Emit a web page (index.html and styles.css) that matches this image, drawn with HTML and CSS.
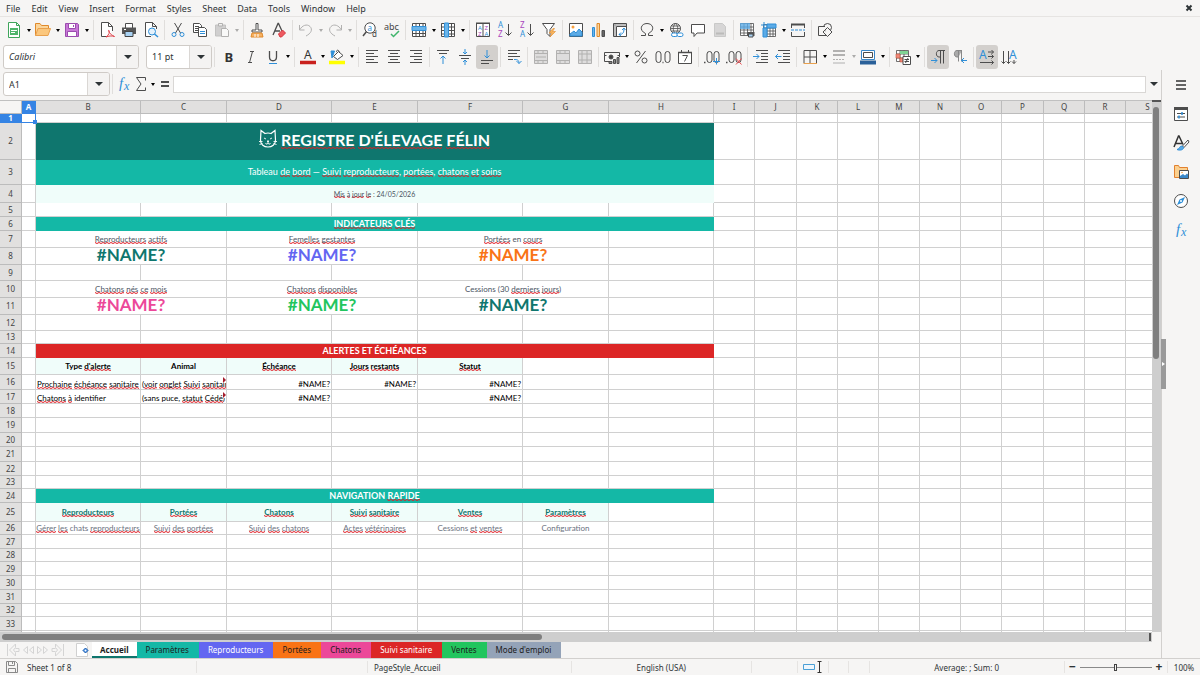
FILE: index.html
```html
<!DOCTYPE html>
<html lang="en">

<head>
    <meta charset="UTF-8">
    <meta name="viewport" content="width=device-width, initial-scale=1.0">
    <title>Registre d'élevage félin</title>
    <link rel="stylesheet" href="styles.css">
</head>

<body>
    <div class="app">
        <header class="menubar">
            <nav class="menus">
                <button>File</button>
                <button>Edit</button>
                <button>View</button>
                <button>Insert</button>
                <button>Format</button>
                <button>Styles</button>
                <button>Sheet</button>
                <button>Data</button>
                <button>Tools</button>
                <button>Window</button>
                <button>Help</button>
            </nav>
            <button class="close" aria-label="Close document"><svg viewBox="0 0 8 8"><path d="M1.5 1.5l5 5M6.5 1.5l-5 5"/></svg></button>
        </header>

        <div class="toolbar standard" id="standard"></div>

        <div class="toolbar formatting">
            <div class="combo font-name">
                <input type="text" value="Calibri" aria-label="Font name">
                <button aria-label="Choose font"><i class="arrow big"></i></button>
            </div>
            <div class="combo font-size">
                <input type="text" value="11 pt" aria-label="Font size">
                <button aria-label="Choose size"><i class="arrow big"></i></button>
            </div>
            <div class="tools" id="formatting"></div>
        </div>

        <div class="workspace">
            <main class="main">
                <div class="formula-bar">
                    <div class="combo name-box">
                        <input type="text" value="A1" aria-label="Name box">
                        <button aria-label="Choose range"><i class="arrow big"></i></button>
                    </div>
                    <i class="sep"></i>
                    <div class="tools" id="formula"></div>
                    <input class="formula-input" type="text" aria-label="Formula">
                    <button class="expand" aria-label="Expand formula bar"><i class="arrow big"></i></button>
                </div>

                <div class="sheet">
                    <div class="grid">
                        <table id="grid"></table>
                    </div>
                    <div class="vscroll"><i class="thumb"></i></div>
                </div>
                <div class="hscroll"><i class="thumb"></i><i class="end"></i></div>

                <div class="tabs">
                    <div class="tab-nav">
                        <button aria-label="First sheet"><svg viewBox="0 0 14 14"><path d="M1.500 1v12M9.500 1l-6 6 6 6v-3.500L7.500 7l2-2.500zM9.500 5.500H13v3H9.500"/></svg></button>
                        <button aria-label="Previous sheet"><svg viewBox="0 0 14 14"><path d="M6.500 3.500l-4 3.500 4 3.500zM12.500 3.500l-4 3.500 4 3.500z"/></svg></button>
                        <button aria-label="Next sheet"><svg viewBox="0 0 14 14"><path d="M1.500 3.500l4 3.500-4 3.500zM7.500 3.500l4 3.500-4 3.500z"/></svg></button>
                        <button aria-label="Last sheet"><svg viewBox="0 0 14 14"><path d="M12.500 1v12M4.500 1l6 6-6 6V9.500L6.500 7l-2-2.500zM4.500 5.500H1v3h3.500"/></svg></button>
                    </div>
                    <button class="add-sheet" aria-label="Add sheet"><svg viewBox="0 0 12 14"><path d="M.5 .5h8l3 3v10h-11z" fill="#fff" stroke="#d0d0d0"/><path d="M9.500 5L12 7.500 9.500 10 7 7.500z" fill="#3584e4" stroke="#1f5fae"/><circle cx="9.500" cy="7.500" r="1" fill="#fff"/></svg></button>
                    <button class="tab active">Accueil</button>
                    <button class="tab teal">Paramètres</button>
                    <button class="tab indigo">Reproducteurs</button>
                    <button class="tab orange">Portées</button>
                    <button class="tab pink">Chatons</button>
                    <button class="tab red">Suivi sanitaire</button>
                    <button class="tab green">Ventes</button>
                    <button class="tab slate">Mode d'emploi</button>
                </div>
            </main>

            <aside class="sidebar" id="sidebar"><i class="grip"></i></aside>
        </div>

        <footer class="statusbar">
            <svg class="save-state" viewBox="0 0 12 12"><path d="M.5 .5h9l2 2v9H.5zM2.500 .5v4h6v-4M2.500 11.500v-4h7v4M6.500 1v2" fill="none" stroke="#8a8a8a"/></svg>
            <span class="field sheet-count">Sheet 1 of 8</span>
            <span class="field search-result"></span>
            <span class="field page-style">PageStyle_Accueil</span>
            <span class="field language">English (USA)</span>
            <span class="field insert-mode"></span>
            <span class="field modes"><svg viewBox="0 0 20 12"><path d="M.5 3.500h11v5H.5z" fill="#eef6fc" stroke="#4a9fd6"/><path d="M14.500 .5h4M14.500 11.500h4M16.500 1v10" fill="none" stroke="#333"/></svg></span>
            <span class="field blank"></span>
            <span class="field blank"></span>
            <span class="field sum">Average: ; Sum: 0</span>
            <div class="field zoom">
                <button aria-label="Zoom out">−</button>
                <input type="range" min="0" max="100" value="50" aria-label="Zoom">
                <button aria-label="Zoom in">+</button>
            </div>
            <span class="percent">100%</span>
        </footer>
    </div>

    <script src="script.js"></script>
</body>
</html>
```
FILE: styles.css
```css
* {
    box-sizing: border-box;
}

body {
    margin: 0;
    font-family: "Noto Sans", sans-serif;
    font-size: 9px;
    color: #2e3436;
    background-color: #f6f5f4;
}

button,
input {
    font: inherit;
    color: inherit;
    margin: 0;
    padding: 0;
    border: none;
    background: none;
}

button {
    display: flex;
    align-items: center;
    justify-content: center;
    flex: none;
}

svg {
    display: block;
    flex: none;
    overflow: visible;
}

.app {
    display: flex;
    flex-direction: column;
    height: 100vh;
    overflow: hidden;
}

/* menu bar */
.menubar {
    display: flex;
    justify-content: space-between;
    height: 17px;
    border-bottom: 1px solid #e6e4e2;
}

.menus {
    display: flex;
    gap: 1px;
    padding-left: 1px;
}

.menus button {
    padding: 0 5px;
}

.close {
    width: 22px;
}

.close svg {
    width: 8px;
    height: 8px;
    stroke: #2e3436;
    stroke-width: 2;
}

/* toolbars */
.toolbar {
    display: flex;
    align-items: center;
    height: 27px;
    padding-left: 3px;
}

.standard {
    height: 26px;
}

.tools {
    display: flex;
    align-items: center;
}

.tool {
    width: 22px;
    height: 24px;
    border-radius: 3px;
}

.tool svg {
    width: 16px;
    height: 16px;
    fill: none;
    stroke: #4d4d4d;
}

.tool text {
    stroke: none;
    line-height: 1;
}

.tool .serif {
    font-family: "Liberation Serif", serif;
}

.tool.on {
    background-color: #d3d0cd;
}

.tool.off {
    opacity: 0.4;
}

.drop {
    width: 7px;
    height: 24px;
}

.drop.off {
    opacity: 0.3;
}

.arrow {
    border: 2px solid transparent;
    border-top: 3px solid #000;
    border-bottom: none;
}

.arrow.big {
    border-width: 4px 4px 0;
    border-top-color: #2e3436;
}

.sep {
    flex: none;
    width: 1px;
    height: 20px;
    margin: 0 2px;
    background-color: #e0dedc;
}

.drop + .sep {
    margin-left: 3px;
}

.combo {
    display: flex;
    flex: none;
    height: 24px;
    border: 1px solid #cfcbc7;
    border-radius: 3px;
    background-color: #fff;
    overflow: hidden;
}

.combo input {
    flex: 1;
    min-width: 0;
    padding-left: 5px;
}

.combo button {
    width: 22px;
    border-left: 1px solid #dad7d4;
    background-color: #f4f3f2;
}

.font-name {
    width: 136px;
    margin-right: 7px;
}

.font-name input {
    font-style: italic;
}

.font-size {
    width: 66px;
    margin-right: 2px;
}

.formatting .tools::before {
    content: "";
    width: 1px;
    height: 20px;
    margin-right: 3px;
    background-color: #e0dedc;
}

/* middle part: sheet and sidebar */
.workspace {
    display: flex;
    flex: 1;
    min-height: 0;
}

.main {
    display: flex;
    flex-direction: column;
    flex: 1;
    min-width: 0;
}

.formula-bar {
    display: flex;
    align-items: center;
    height: 30px;
    padding: 0 0 2px 3px;
}

.name-box {
    width: 107px;
}

.formula-bar .tool {
    width: 17px;
}

.formula-input {
    flex: 1;
    min-width: 0;
    height: 17px;
    border: 1px solid #d9d7d5;
    background-color: #fff;
}

.expand {
    width: 15px;
    height: 17px;
}

.sheet {
    display: flex;
    flex: 1;
    min-height: 0;
}

.grid {
    flex: 1;
    min-width: 0;
    overflow: hidden;
    border-top: 1px solid #c0c0c0;
    background-color: #fff;
}

.grid table {
    table-layout: fixed;
    width: 1170px;
    border-collapse: separate;
    border-spacing: 0;
    font-family: Lato, Carlito, sans-serif;
    font-size: 8px;
    line-height: 10px;
    color: #000;
}

.grid th,
.grid td {
    padding: 0 1px;
    border-right: 1px solid #d0d0d0;
    border-bottom: 1px solid #d0d0d0;
    overflow: hidden;
    white-space: nowrap;
}

.grid th {
    padding: 0;
    font-family: "Noto Sans", sans-serif;
    font-size: 8px;
    font-weight: normal;
    color: #444;
    background-color: #e1e0df;
    border-color: #bcbcbc;
}

.grid thead th:first-child {
    background-color: #f6f5f4;
}

.grid th.current {
    font-weight: bold;
    color: #fff;
    background-color: #3584e4;
    border-color: #3584e4;
}

.grid td.cursor {
    position: relative;
    overflow: visible;
    border-color: #3584e4;
}

.cursor::after {
    content: "";
    position: absolute;
    right: -2px;
    bottom: -2px;
    width: 4px;
    height: 4px;
    background-color: #3584e4;
}

.center {
    text-align: center;
}

.right {
    text-align: right;
}

.bottom {
    vertical-align: bottom;
}

/* spell checker wave */
.typo {
    background: url("data:image/svg+xml,%3Csvg xmlns='http://www.w3.org/2000/svg' width='4' height='2'%3E%3Cpath d='M0 .5L2 1.500 4 .5' fill='none' stroke='%23e01b24'/%3E%3C/svg%3E") left bottom repeat-x;
}

/* text runs on under the right edge of the cell */
.grid td.cut {
    position: relative;
}

.cut::after {
    content: "";
    position: absolute;
    right: 0;
    top: 2px;
    border: 3px solid #fff;
    border-width: 3px 0 3px 3px;
    border-left-color: #a51d2d;
}

.grid td.title {
    padding-bottom: 3px;
    font-size: 16px;
    line-height: 20px;
    font-weight: bold;
    color: #fff;
    background-color: #0f766e;
    border-color: #0f766e;
}

.title svg {
    display: inline-block;
    width: 18px;
    height: 20px;
    margin-right: 4px;
    vertical-align: -3px;
    fill: none;
    stroke: #fff;
}

.grid td.subtitle {
    font-size: 9px;
    color: #fff;
    background-color: #14b8a6;
    border-color: #14b8a6;
}

.grid td.updated {
    font-size: 7px;
    color: #4b5563;
    background-color: #f0fdfa;
    border-color: #f0fdfa;
}

.grid td.section {
    font-size: 9px;
    font-weight: bold;
    color: #fff;
    background-color: #14b8a6;
    border-color: #14b8a6;
}

.grid td.alert {
    background-color: #dc2626;
    border-color: #dc2626;
}

.label {
    color: #4b5563;
}

.grid td.value {
    font-size: 17px;
    line-height: 14px;
    font-weight: bold;
    vertical-align: top;
}

.value.teal {
    color: #0f766e;
}

.value.indigo {
    color: #6366f1;
}

.value.orange {
    color: #f97316;
}

.value.pink {
    color: #ec4899;
}

.value.green {
    color: #22c55e;
}

.head {
    font-weight: bold;
    background-color: #f0fdfa;
}

.grid td.link {
    color: #0f766e;
}

.grid td.hint {
    padding: 0;
    color: #6b7280;
}

/* scroll bars */
.vscroll {
    width: 9px;
    padding: 5px 2px 0 1px;
    border-top: 2px solid #555;
    background-color: #cecece;
}

.vscroll .thumb {
    display: block;
    height: 48%;
    border-radius: 3px;
    background-color: #7f7f7f;
}

.hscroll {
    display: flex;
    align-items: center;
    justify-content: space-between;
    height: 10px;
    margin-right: 9px;
    padding: 0 1px 0 2px;
    background-color: #cecece;
}

.hscroll .thumb {
    width: 47%;
    height: 6px;
    border-radius: 3px;
    background-color: #7f7f7f;
}

.hscroll .end {
    width: 2px;
    height: 8px;
    background-color: #555;
}

/* sheet tabs */
.tabs {
    display: flex;
    height: 16px;
    font-size: 8px;
}

.tab-nav {
    display: flex;
    padding: 0 6px 0 5px;
}

.tab-nav button {
    width: 15px;
}

.tab-nav svg {
    width: 14px;
    height: 14px;
    fill: none;
    stroke: #d4d4d4;
}

.add-sheet {
    width: 21px;
}

.add-sheet svg {
    width: 12px;
    height: 14px;
}

.tab {
    padding: 0 10px 2px 9px;
    color: #1c1c1c;
}

.tab.active {
    padding: 0 8px 2px;
    font-weight: bold;
    background-color: #fff;
    box-shadow: inset 0 -2px #0f766e;
}

.tab.teal {
    background-color: #14b8a6;
}

.tab.indigo {
    color: #fff;
    background-color: #6366f1;
}

.tab.orange {
    background-color: #f97316;
}

.tab.pink {
    background-color: #ec4899;
}

.tab.red {
    color: #fff;
    background-color: #dc2626;
}

.tab.green {
    background-color: #22c55e;
}

.tab.slate {
    background-color: #94a3b8;
}

/* sidebar */
.sidebar {
    position: relative;
    display: flex;
    flex-direction: column;
    align-items: center;
    gap: 5px;
    width: 39px;
    padding-top: 3px;
    border-left: 1px solid #d2d0ce;
}

.sidebar .grip {
    position: absolute;
    left: -1px;
    top: 50%;
    width: 5px;
    height: 50px;
    margin-top: -25px;
    background-color: #9a9a9a;
}

.grip::after {
    content: "";
    position: absolute;
    left: 1px;
    top: 23px;
    border: 2px solid transparent;
    border-left: 3px solid #fff;
    border-right: none;
}

/* status bar */
.statusbar {
    display: flex;
    align-items: center;
    height: 17px;
    border-top: 1px solid #d2d0ce;
    font-size: 8px;
}

.save-state {
    width: 12px;
    height: 12px;
    margin: 0 3px 0 6px;
}

.statusbar .field {
    display: flex;
    align-items: center;
    justify-content: center;
    min-width: 0;
    height: 12px;
    border-right: 1px solid #e6e4e2;
}

.statusbar .sheet-count {
    flex: 174;
    justify-content: flex-start;
    padding-left: 6px;
}

.search-result {
    flex: 174;
}

.statusbar .page-style {
    flex: 202;
    justify-content: flex-start;
    padding-left: 6px;
}

.language {
    flex: 184;
}

.insert-mode {
    flex: 46;
}

.modes {
    flex: 31;
}

.modes svg {
    width: 20px;
    height: 12px;
}

.blank {
    flex: 20;
}

.sum {
    flex: 199;
}

.zoom {
    flex: 97;
    gap: 3px;
    padding: 0 4px;
}

.zoom button {
    width: 8px;
    font-size: 12px;
    font-weight: bold;
    line-height: 12px;
}

.zoom input {
    flex: 1;
    min-width: 0;
    height: 8px;
    appearance: none;
    background: linear-gradient(#8a8a8a, #8a8a8a) center / 100% 1px no-repeat;
}

.zoom input::-webkit-slider-thumb {
    appearance: none;
    width: 3px;
    height: 7px;
    border: 1px solid #444;
    background-color: #f6f5f4;
}

.percent {
    width: 32px;
    text-align: center;
}
```
FILE: script.js
```js
const grey = 'stroke="#9a9a9a"';
const blue = 'stroke="#2f8fd8"';

// 16x16 drawings, default stroke #4d4d4d and no fill
const icons = {
    new: `<path d="M2.500 .5h8l3 3v12h-11z" stroke="#3fa55b" fill="#fff"/><path d="M10.500 .5v3h3" stroke="#3fa55b"/><path d="M4 6h8v7H4z" fill="#4fb56b" stroke="none"/><path d="M5 8.500h6M5 10.500h4" stroke="#fff"/>`,
    open: `<path d="M.5 13.500v-12h4.500l1.500 2h7v3" stroke="#e08a2c" fill="#fbd59a"/><path d="M.5 13.500l2.500-7h12.500l-2.500 7z" stroke="#e9a14e" fill="#fbc77d"/>`,
    save: `<path d="M1.500 1.500h12l1 1v12h-13z" fill="#c978d8" stroke="#9b4cae"/><path d="M4.500 1.500h7v5h-7zM3.500 9.500h9v5h-9z" fill="#fff" stroke="#9b4cae"/><path d="M9.500 3v2" stroke="#9b4cae"/>`,
    pdf: `<path d="M13.500 9V4.500l-4-4h-7v14H8M9.500 .5v4h4" fill="#fff"/><path d="M7 15c3-2 4-5 3-6.500s-1 3 5.500 6c-3-1-6-.5-8.500 .5" stroke="#e0434b"/>`,
    print: `<path d="M4.500 6V1.500h7V6" fill="#fff"/><path d="M1 5.500h14V12H1z" fill="#555" stroke="none"/><path d="M4 9.500h8v5H4z" fill="#a9d2f3" stroke="#444"/><path d="M3 7.500h2" stroke="#fff"/>`,
    preview: `<path d="M8 14.500H2.500V.5h7l4 4V7M9.500 .5v4h4" fill="#fff"/><circle cx="9" cy="9.500" r="3.500" fill="#e4f1fb" ${blue}/><path d="M11.500 12l3.500 3" ${blue} stroke-width="1.500"/>`,
    cut: `<path d="M4.500 1l6 10M11.500 1l-6 10"/><circle cx="4" cy="12.500" r="2" ${blue}/><circle cx="12" cy="12.500" r="2" ${blue}/>`,
    copy: `<path d="M1.500 1.500h6l2 2v7h-8zM3 4.500h4M3 6.500h4M3 8.500h4" fill="#fff"/><path d="M6.500 5.500h6l2 2v7h-8z" fill="#fff"/><path d="M8 9.500h5M8 11.500h5" ${blue}/>`,
    paste: `<path d="M1.500 3h10v11h-10z" fill="#999" stroke="#777"/><path d="M4.500 1.500h4V4h-4z" fill="#eee"/><path d="M7.500 6.500h5l2 2v6h-7z" fill="#fff"/>`,
    clone: `<path d="M7 1.500h2V8h4v2H3V8h4z" fill="#fff"/><path d="M3 11h10l1 4H2z" fill="#f7b263" stroke="#e08a2c"/><path d="M6 12v3M9 12v3" stroke="#fff"/>`,
    clear: `<path d="M2 13L7 1.500h.5L11 9M4 9h5" stroke-width="1.300"/><path d="M7.500 12l4-4 3 3-4 4H9z" fill="#ee5a60" stroke="#d6363e"/>`,
    undo: `<path d="M1.500 3v5h5M2 7.500c2-4 7-6 10-3s1 7-4 9.500"/>`,
    redo: `<path d="M14.500 3v5h-5M14 7.500c-2-4-7-6-10-3s-1 7 4 9.500"/>`,
    find: `<circle cx="8" cy="6" r="5.200" fill="#fff"/><path d="M4.500 9.500L1 14" stroke-width="1.500"/><text x="5.500" y="8.500" font-size="8" fill="#2f8fd8">a</text><text x="10" y="15" font-size="8" fill="#444">d</text>`,
    spell: `<text x="0" y="7.500" font-size="9" fill="#444">abc</text><path d="M7 12l2.500 2.500L15 9" stroke="#3fb56b" stroke-width="1.500"/>`,
    rows: `<path d="M1.500 1.500h13v13h-13zM1.500 11.500h13M5 1.500v13M8.500 1.500v13M12 1.500v13" fill="#fff"/><path d="M1 4.500h14v4H1z" fill="#6bb5ea" ${blue}/>`,
    cols: `<path d="M1.500 1.500h13v13h-13zM1.500 5h13M1.500 8.500h13M1.500 12h13M11.500 1.500v13" fill="#fff"/><path d="M4.500 1h4v14h-4z" fill="#6bb5ea" ${blue}/>`,
    sort: `<path d="M1 1.500h14" stroke-width="2"/><path d="M1.500 2v12.500h13V2M8 2v12.500" fill="#fff"/><text x="3" y="8" font-size="6" fill="#2f8fd8">A</text><text x="3" y="14" font-size="6" fill="#a945bd">Z</text><text x="9.500" y="8" font-size="6" fill="#a945bd">Z</text><text x="9.500" y="14" font-size="6" fill="#2f8fd8">A</text>`,
    sortAsc: `<text x="1" y="6" font-size="8" fill="#2f8fd8">A</text><text x="1" y="15" font-size="8" fill="#a945bd">Z</text><path d="M11.500 2v11M8.500 10.500l3 3 3-3"/>`,
    sortDesc: `<text x="1" y="6" font-size="8" fill="#a945bd">Z</text><text x="1" y="15" font-size="8" fill="#2f8fd8">A</text><path d="M11.500 2v11M8.500 10.500l3 3 3-3"/>`,
    filter: `<path d="M1.500 1.500h12l-4.500 6v7l-3-3v-4z" fill="#fff"/><path d="M12 6.500l-4 4.500h3l-2 4 5.500-5.500h-3l2-3z" fill="#f9b75e" stroke="#e08a2c" stroke-width=".6"/>`,
    image: `<path d="M1.500 1.500h13v13h-13z" fill="#fff"/><path d="M2 14v-2l4-3 2 2 3-4 3 3v4z" fill="#5cabe6" ${blue}/><circle cx="5" cy="5" r="1.500" fill="#f9a13e" stroke="none"/>`,
    chart: `<path d="M2.500 5.500h2v9h-2z" fill="#6bb5ea" ${blue}/><path d="M7 1.500h2.500v13H7z" fill="#fbd59a" stroke="#e08a2c"/><path d="M12 8.500h2.500v6H12z" fill="#666"/>`,
    pivot: `<path d="M1.500 1.500h13v13h-13z" fill="#fff"/><path d="M2 3h12M3 2v12" stroke="#aaa" stroke-width="1.500"/><path d="M4.500 14V4.500H14"/><path d="M7 12.500c4 0 5-2 5-6M7 12.500l2-2M7 12.500l2 1.500M12 6l-2 2M12 6l1.500 2" ${blue}/>`,
    omega: `<path d="M2 13.500h4.500v-2C-.5 8 2 1.500 8 1.500s8.500 6.500 1.500 10v2H14"/>`,
    link: `<circle cx="7.500" cy="6.500" r="5"/><path d="M2.500 6.500h10M3.500 4h8M3.500 9h8M7.500 1.500c-3 3-3 7 0 10M7.500 1.500c3 3 3 7 0 10" stroke-width=".8"/><rect x="3.500" y="11" width="6" height="3.500" rx="1.700" fill="#fff" ${blue}/><rect x="9" y="11" width="6" height="3.500" rx="1.700" fill="#fff" ${blue}/>`,
    comment: `<path d="M1.500 2.500h13v8.500H7l-3 3.500V11H1.500z" fill="#fff"/>`,
    header: `<path d="M2.500 1.500h8l3 3v10h-11z" fill="#aaa" stroke="#888"/><path d="M4 11.500h8" stroke="#666" stroke-width="2"/>`,
    printArea: `<path d="M1.500 1.500h13v12h-13zM5 1.500v12M8.500 1.500v12M12 1.500v12M1.500 5h13M1.500 8h13M1.500 11h13" fill="#fff" stroke-width=".8"/><path d="M1 1h10v6H1z" fill="#5cabe6" opacity=".8" stroke="none"/><path d="M8 10h7.500v4H8z" fill="#555" stroke="none"/><path d="M9.500 12h4.500v3H9.500z" fill="#a9d2f3"/>`,
    freeze: `<path d="M2.500 2.500h12v12h-12zM6 2.500v12M9 2.500v12M12 2.500v12M2.500 6h12M2.500 9h12M2.500 12h12" fill="#fff" stroke-width=".8"/><path d="M6 2h9v4H6zM2 6h4v9H2z" fill="#5cabe6" ${blue}/><path d="M3 0v6M0 3h6" ${blue}/>`,
    split: `<path d="M1 2.500h14" stroke-width="2"/><path d="M1.500 2v4M14.500 2v4M1.500 10v4.500h13V10"/><path d="M1 8h14" ${blue} stroke-dasharray="3 1"/>`,
    shapes: `<circle cx="10.500" cy="5.500" r="4"/><path d="M8 4.500H1.500v9H9M10.500 5.500l4.500 4.500-4.500 4.500L6 10z" fill="#f6f5f4"/>`,
    bold: `<text x="3.500" y="13" font-size="13" font-weight="bold" fill="#333">B</text>`,
    italic: `<path d="M7 2.500h4M5 13.500h4M9.500 2.500l-3 11"/>`,
    underline: `<path d="M4.500 2v6c0 5 7 5 7 0V2" stroke-width="1.300"/><path d="M4 14.500h8" ${blue}/>`,
    fontColor: `<text x="4" y="10" font-size="12" fill="#333">A</text><path d="M0 13.500h16" stroke="#c9211e" stroke-width="3.500"/>`,
    fill: `<path d="M4.500 7.500l5-5 4.500 4-5.500 4zM7.500 3c0-3 3-2 3 1" fill="#fff"/><path d="M2 2h3.500L3 9z" fill="#2f8fd8" ${blue}/><path d="M0 13.500h16" stroke="#ffff00" stroke-width="3.500"/>`,
    left: `<path d="M2 1.500h12M2 4.500h8M2 7.500h12M2 10.500h8M2 13.500h12"/>`,
    centre: `<path d="M2 1.500h12M4 4.500h8M2 7.500h12M4 10.500h8M2 13.500h12"/>`,
    rightAlign: `<path d="M2 1.500h12M6 4.500h8M2 7.500h12M6 10.500h8M2 13.500h12"/>`,
    top: `<path d="M2 1.500h12M4 4.500h8"/><path d="M8 7v8M5.500 9.500L8 7l2.500 2.500" ${blue}/>`,
    middle: `<path d="M2 6.500h12M4 9.500h8"/><path d="M8 0v5M6 3l2 2 2-2M8 16v-5M6 13l2-2 2 2" ${blue}/>`,
    bottomAlign: `<path d="M2 11.500h12M2 14.500h8"/><path d="M8 1v8M5.500 6.500L8 9l2.500-2.500" ${blue}/>`,
    wrap: `<path d="M2 1.500h12M2 4.500h9M2 7.500h12M2 10.500h5"/><path d="M8 10.500c3 0 5 0 5 4M10.500 12l2.500 2.500 2.500-2.500" ${blue}/>`,
    merge: `<path d="M1.500 1.500h13v13h-13zM1.500 4.500h13M1.500 11.500h13M5 1.500v3M10 1.500v3M5 11.500v3M10 11.500v3M3 8h10" fill="#bbb"/>`,
    mergeRow: `<path d="M1.500 1.500h13v13h-13zM1.500 4.500h13M1.500 11.500h13M5 1.500v3M10 1.500v3M5 11.500v3M10 11.500v3" fill="#bbb"/>`,
    unmerge: `<path d="M1.500 1.500h13v13h-13zM1.500 5h13M1.500 11h13M5 1.500v13M10 1.500v13" fill="#bbb"/>`,
    currency: `<path d="M15.500 8V3.500H.5v9H6M1 6.500h1.500M13.500 6.500h2"/><circle cx="7" cy="8" r="2" fill="#444"/><path d="M9.500 10.500h2v4h-2zM13 8.500h2v6h-2zM5 12.500h3v2H5z" fill="#888"/>`,
    percent: `<circle cx="4.500" cy="4.500" r="2.500"/><circle cx="11.500" cy="11.500" r="2.500"/><path d="M12.500 2l-9 12"/>`,
    number: `<rect x="1" y="2.500" width="5" height="11" rx="2.500"/><rect x="10" y="2.500" width="5" height="11" rx="2.500"/><path d="M7.500 13.500h1" stroke-width="1.500"/>`,
    date: `<path d="M1.500 3.500h13v11h-13zM4.500 1v3M11.500 1v3" fill="#fff"/><path d="M1 3.500h14" stroke-width="1.500"/><path d="M5.500 6.500h5l-3 6"/>`,
    addDecimal: `<path d="M0 13.500h1.500" stroke-width="1.500"/><rect x="3" y="2.500" width="5" height="11" rx="2.500"/><rect x="10" y="2.500" width="5" height="11" rx="2.500"/><path d="M12.500 9v6.500M9 12.500h7" ${blue}/>`,
    delDecimal: `<path d="M0 13.500h1.500" stroke-width="1.500"/><rect x="3" y="2.500" width="5" height="11" rx="2.500"/><rect x="10" y="2.500" width="5" height="11" rx="2.500"/><path d="M10 9.500l5.500 6M15.500 9.500l-5.500 6" stroke="#ee4b50"/>`,
    indent: `<path d="M3 1.500h12M8 4.500h7M8 7.500h7M8 10.500h7M3 13.500h12"/><path d="M0 7.500h6M3.500 5L6 7.500 3.500 10" ${blue}/>`,
    outdent: `<path d="M3 1.500h12M8 4.500h7M8 7.500h7M8 10.500h7M3 13.500h12"/><path d="M.5 7.500h6M3 5L.5 7.500 3 10" ${blue}/>`,
    borders: `<path d="M2 1.500h12.500V14M2 1.500V14M8 1.500V14M2 8h12.500"/><path d="M1.500 14.500h13.500" stroke="#e9a14e"/>`,
    lineStyle: `<path d="M2 2h12M2 6h12" stroke-width="2"/><path d="M2 10.500h12" stroke-dasharray="2 1"/><path d="M2 14h12"/>`,
    lineColor: `<path d="M1.500 1.500h13v9h-13z" fill="#fff" stroke="#3a87c8"/><path d="M3.500 3.500h9v5h-9z"/><path d="M0 13.500h16" stroke="#2a6099" stroke-width="4"/>`,
    conditional: `<path d="M1.500 1.500h12v11h-12zM5 1.500v11M9 1.500v11M1.500 5h12M1.500 9h12" fill="#fff" stroke-width=".8"/><path d="M5 2h8v3H5z" fill="#7fd394" stroke="none"/><path d="M1 5h4v4H1zM5 9h3v4H5z" fill="#f0887a" stroke="#c2573c" stroke-width=".6"/><path d="M8 7.500h7.500v8H8z" fill="#fff"/><path d="M9.500 10.500h4.500M9.500 12.500h4.500M13 9l-2.500 5"/>`,
    ltr: `<path d="M15 1.500H9C5.500 1.500 5.500 8 9 8h1.500M10.500 1.500v13M13.500 1.500v13"/><path d="M1 11.500h6M4.500 9L7 11.500 4.500 14" ${blue}/>`,
    rtl: `<path d="M10 1.500H5C1.500 1.500 1.500 8 5 8h1.500M6.500 1.500v11M9.500 1.500v11" fill="#aaa" stroke="#888"/><path d="M15 11.500H9.500M12 9l-2.500 2.500L12 14" ${blue}/>`,
    horizontal: `<text x="0" y="10" font-size="12" fill="#2f8fd8">A</text><path d="M9 3h5.500M12.500 1l2 2-2 2M9 7.500h5.500M12.500 5.500l2 2-2 2M1 13.500h13.500M12.500 11.500l2 2-2 2"/>`,
    vertical: `<text x="8" y="10" font-size="12" fill="#2f8fd8">A</text><path d="M2.500 2v12.500M.5 12.500l2 2 2-2M7.500 2v12.500M5.500 12.500l2 2 2-2M13 11v3.500M11 12.500l2 2 2-2"/>`,
    fx: `<text x="3" y="12" font-size="15" font-style="italic" class="serif" fill="#2f8fd8">f</text><text x="8" y="14" font-size="12" font-style="italic" class="serif" fill="#2f8fd8">x</text>`,
    sigma: `<path d="M12.500 4.500v-3H3.500L8 8l-4.500 6.500h9v-3"/>`,
    equals: `<path d="M4 6h8M4 10h8" stroke-width="2"/>`,
    menu: `<path d="M3 4h10M3 8h10M3 12h10" stroke="#333" stroke-width="1.500"/>`,
    properties: `<path d="M1.500 1.500h13v13h-13z" fill="#fff"/><path d="M1 2.500h14" stroke-width="3"/><path d="M4 7.500h8M4 11h8"/><path d="M9 6v3M6 9.500v3" ${blue} stroke-width="1.500"/>`,
    styles: `<path d="M1 12L5.500 1h.5L10 9.500M3 8.500h6" stroke="#333" stroke-width="1.500"/><path d="M15 5l-5.500 6 1.500 1.500L16 7z" fill="#fff"/><path d="M9 11c-3 0-2 3-5 3.500 3 1.500 7 0 6.500-2z" fill="#5cabe6" ${blue}/>`,
    gallery: `<path d="M1.500 13.500v-12h4l1 2h8v10z" fill="#fbd08f" stroke="#e2812f"/><path d="M6.500 6.500h9v8h-9z" fill="#fff"/><path d="M7 14v-2l3-2 2 1.500 2-2 1 1V14z" fill="#3a87c8" stroke="none"/><circle cx="9" cy="8.500" r=".8" fill="#f9a13e" stroke="none"/>`,
    navigator: `<circle cx="8" cy="8" r="6.500" fill="#fff"/><path d="M12 4L9.500 9.500 4 12l2.500-5.500z" fill="#2f8fd8" stroke="none"/><circle cx="8" cy="8" r="1" fill="#fff" stroke="none"/>`
};

// "+" adds a drop-down arrow, "!" a pressed state, "-" a disabled one, "|" is a separator
const bars = {
    standard: 'new+ open+ save+ | pdf print preview | cut copy paste-+ | clone clear | undo-+ redo-+ | find spell | rows+ cols+ | sort sortAsc sortDesc filter | image chart pivot | omega+ link comment header- | printArea freeze+ split | shapes',
    formatting: 'bold italic underline+ | fontColor+ fill+ | left centre rightAlign | top middle bottomAlign! | wrap | merge- mergeRow- unmerge- | currency+ percent number date | addDecimal delDecimal | indent outdent | borders+ lineStyle-+ lineColor+ | conditional+ | ltr! rtl | horizontal! vertical',
    formula: 'fx sigma+ equals',
    sidebar: 'menu properties styles gallery navigator fx'
};

for (const id in bars) {
    const html = bars[id].split(' ').map(item => {
        if (item === '|') return '<i class="sep"></i>';
        const name = item.replace(/[-+!]/g, '');
        const off = item.includes('-') ? ' off' : '';
        const on = item.includes('!') ? ' on' : '';
        const drop = item.includes('+') ? `<button class="drop${off}" aria-label="${name} options"><i class="arrow"></i></button>` : '';
        return `<button class="tool${off}${on}" aria-label="${name}"><svg viewBox="0 0 16 16">${icons[name]}</svg></button>${drop}`;
    }).join('');
    document.getElementById(id).insertAdjacentHTML('beforeend', html);
}

const cat = '<svg viewBox="0 0 18 20"><path d="M1.500 11L2 1.500l4 3q3-1 6 0l4-3 .5 9.500c0 4.500-3.500 7-7.500 7s-7.500-2.500-7.500-7z" stroke-width="1.200"/><path d="M5 9l2 1M13 9l-2 1M8 12h2l-1 1zM9 13v1M6.500 14c.5 1.500 2 1.500 2.500 0 .5 1.500 2 1.500 2.500 0M0 12.500h3.500M.5 15.500l3-1M18 12.500h-3.500M17.500 15.500l-3-1" stroke-width=".9"/></svg>';

const widths = [14, 105, 86, 105, 86, 105, 86, 105, 41, 42, 41, 41, 41, 41, 41, 42, 41, 41, 44];
const heights = [9, 37, 25, 18, 14, 14, 17, 17, 16, 17, 17, 16, 13, 14, 17, 15, 14, 14, 15, 14, 15, 14, 13, 14, 19, 13, 14, 13, 14, 14, 14, 13, 14, 14];

// address: [text, class, columns spanned], [words] are underlined by the spell checker
const cells = {
    A1: ['', 'cursor'],
    B2: [cat + "[REGISTRE] [D'ÉLEVAGE] [FÉLIN]", 'title center', 7],
    B3: ['Tableau [de] [bord] — [Suivi] [reproducteurs], [portées], [chatons] [et] [soins]', 'subtitle center', 7],
    B4: ['[Mis] [à] [jour] [le] : 24/05/2026', 'updated center', 7],
    B6: ['[INDICATEURS] [CLÉS]', 'section center', 7],
    B7: ['[Reproducteurs] [actifs]', 'label center', 2],
    D7: ['[Femelles] [gestantes]', 'label center', 2],
    F7: ['[Portées] en [cours]', 'label center', 2],
    B8: ['#NAME?', 'value teal center', 2],
    D8: ['#NAME?', 'value indigo center', 2],
    F8: ['#NAME?', 'value orange center', 2],
    B10: ['[Chatons] [nés] [ce] [mois]', 'label center', 2],
    D10: ['[Chatons] [disponibles]', 'label center', 2],
    F10: ['Cessions (30 [derniers] [jours])', 'label center', 2],
    B11: ['#NAME?', 'value pink center', 2],
    D11: ['#NAME?', 'value green center', 2],
    F11: ['#NAME?', 'value teal center', 2],
    B14: ['ALERTES ET ÉCHÉANCES', 'section alert center', 7],
    B15: ["Type [d'alerte]", 'head center'],
    C15: ['Animal', 'head center'],
    D15: ['[Échéance]', 'head center'],
    E15: ['[Jours] [restants]', 'head center'],
    F15: ['[Statut]', 'head center'],
    B16: ['[Prochaine] [échéance] [sanitaire]', 'bottom'],
    C16: ['([voir] [onglet] [Suivi] [sanitaire])', 'bottom cut'],
    D16: ['#NAME?', 'right bottom'],
    E16: ['#NAME?', 'right bottom'],
    F16: ['#NAME?', 'right bottom'],
    B17: ['[Chatons] [à] identifier', 'bottom'],
    C17: ['(sans puce, [statut] [Cédé])', 'bottom cut'],
    D17: ['#NAME?', 'right bottom'],
    F17: ['#NAME?', 'right bottom'],
    B24: ['NAVIGATION [RAPIDE]', 'section center', 7],
    B25: ['[Reproducteurs]', 'head link center'],
    C25: ['[Portées]', 'head link center'],
    D25: ['[Chatons]', 'head link center'],
    E25: ['[Suivi] [sanitaire]', 'head link center'],
    F25: ['[Ventes]', 'head link center'],
    G25: ['[Paramètres]', 'head link center'],
    B26: ['[Gérer] [les] chats [reproducteurs]', 'hint center'],
    C26: ['[Suivi] [des] [portées]', 'hint center'],
    D26: ['[Suivi] [des] [chatons]', 'hint center'],
    E26: ['[Actes] [vétérinaires]', 'hint center'],
    F26: ['Cessions [et] [ventes]', 'hint center'],
    G26: ['Configuration', 'hint center']
};

const letters = 'ABCDEFGHIJKLMNOPQRS'.split('');

let html = '<colgroup><col style="width:22px">' + widths.map(w => `<col style="width:${w}px">`).join('') + '</colgroup>';
html += '<thead><tr style="height:13px"><th></th>' + letters.map(l => `<th class="${l === 'A' ? 'current' : ''}">${l}</th>`).join('') + '</tr></thead><tbody>';

heights.forEach((height, i) => {
    const row = i + 1;
    html += `<tr style="height:${height}px"><th class="${row === 1 ? 'current' : ''}"><div style="height:${height - 1}px;line-height:${height - 1}px">${row}</div></th>`;
    for (let c = 0; c < letters.length; c++) {
        const [text, style, span] = cells[letters[c] + row] || ['', '', 1];
        const marked = text.replace(/\[([^\]]+)\]/g, '<span class="typo">$1</span>');
        html += `<td class="${style}" colspan="${span || 1}">${marked}</td>`;
        if (span) c += span - 1;
    }
    html += '</tr>';
});

document.getElementById('grid').innerHTML = html + '</tbody>';
```
